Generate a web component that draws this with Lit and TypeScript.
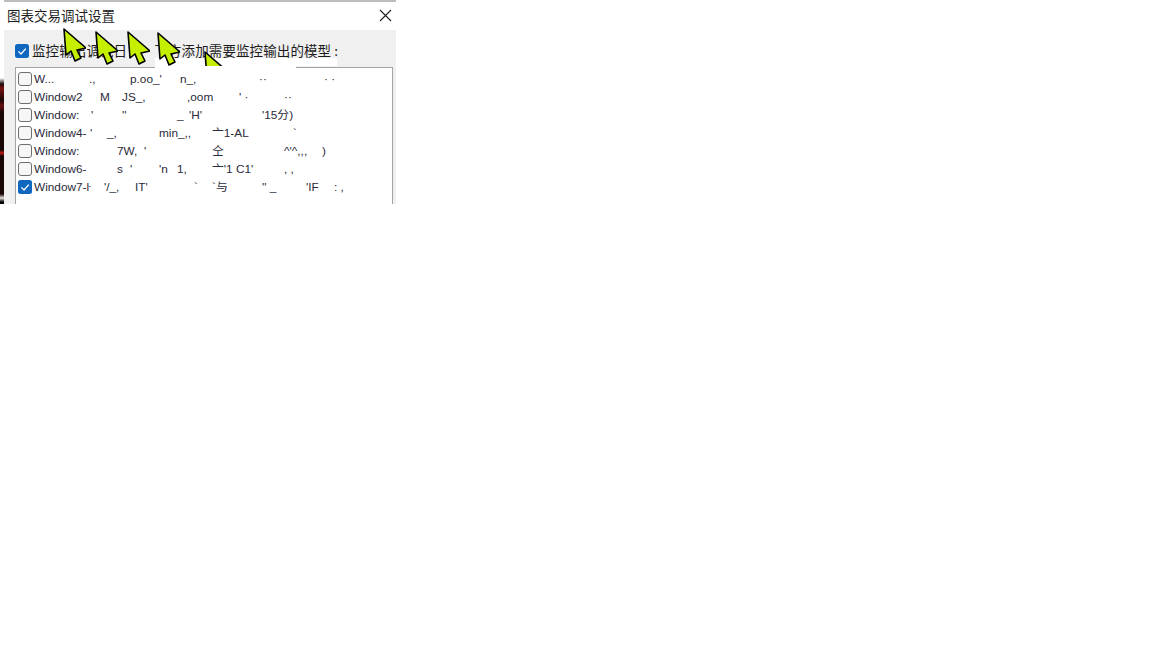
import { LitElement, html, css, svg } from "lit";
import { customElement } from "lit/decorators.js";

type Frag = [number, string];
interface Row { checked: boolean; frags: Frag[] }

const rows: Row[] = [
  { checked: false, frags: [[0, "W..."], [55, ".,"], [96, "p.oo_'"], [146, "n_,"], [225, "··"], [290, "· ·"]] },
  { checked: false, frags: [[0, "Window2"], [66, "M"], [88, "JS_,"], [153, ",oom"], [205, "' ·"], [250, "··"]] },
  { checked: false, frags: [[0, "Window:"], [57, "'"], [88, "''"], [143, "_"], [155, "'H'"], [228, "'15分)"]] },
  { checked: false, frags: [[0, "Window4-"], [56, "'"], [73, "_,"], [125, "min_,,"], [178, "亠1-AL"], [259, "`"]] },
  { checked: false, frags: [[0, "Window:"], [83, "7W,"], [110, "'"], [178, "仝"], [250, "^'^,,,"], [288, ")"]] },
  { checked: false, frags: [[0, "Window6-"], [83, "s"], [96, "'"], [125, "'n"], [143, "1,"], [178, "亠'1 C1'"], [250, ", ,"]] },
  { checked: true, frags: [[0, "Window7-ŀ"], [70, "'/_,"], [101, "IT'"], [160, "`"], [178, "`与"], [228, "'' _"], [272, "'IF"], [300, ": ,"]] },
];

const cursors: [number, number][] = [[64, 29], [96, 32], [128, 32], [158, 33], [205, 52]];

const arrowPath = "M2 2 4 28 9 24 13 34 19 31 15 23 24 21Z";
const checkMark = svg`<path d="M3.4 7.4 6 10l4.8-5.4" fill="none" stroke="#fff" stroke-width="1.3"/>`;

@customElement("app-root")
export class AppRoot extends LitElement {
  static styles = css`
    :host {
      display: block;
      width: 1152px;
      height: 648px;
      background: #fff;
      font-family: "Liberation Sans", "Noto Sans CJK SC", sans-serif;
      color: #222;
    }
    .frame {
      position: relative;
      display: flex;
      width: 396px;
      height: 204px;
      overflow: hidden;
    }
    .strip {
      width: 4px;
      flex: none;
      background: linear-gradient(
        #fff 0, #fff 78px,
        #1a0a0a 84px, #7a1010 88px, #1a0505 100px, #6a1010 106px,
        #1a0505 112px, #1a0505 150px, #c01818 153px, #1a0505 156px,
        #1a0505 194px, #e8e0e0 198px, #000 202px
      );
    }
    .dialog {
      flex: 1;
      display: flex;
      flex-direction: column;
      min-width: 0;
      border-top: 2px solid #bdbdbd;
    }
    .title {
      height: 28px;
      flex: none;
      box-sizing: border-box;
      background: #fff;
      display: flex;
      align-items: center;
      justify-content: space-between;
      padding: 0 3px 3px 3px;
      font-family: "Noto Sans CJK SC", sans-serif;
      font-size: 13.5px;
      color: #1c1c1c;
    }
    .close { width: 13px; height: 13px; margin-right: 1px; margin-top: 1px; display: block; }
    .body {
      flex: 1;
      min-height: 0;
      display: flex;
      flex-direction: column;
      background: #f0f0f0;
      padding-left: 11px;
      padding-right: 3px;
    }
    .head {
      height: 37px;
      flex: none;
      display: flex;
      align-items: center;
      gap: 3px;
      font-family: "Noto Sans CJK SC", sans-serif;
      font-size: 13.5px;
      color: #1c1c1c;
      white-space: nowrap;
      padding-top: 2px;
      box-sizing: border-box;
    }
    .head .box { margin-top: 3px; }
    .label { letter-spacing: 0.1px; }
    .box {
      width: 14px;
      height: 14px;
      flex: none;
      display: block;
    }
    .list {
      flex: 1;
      min-height: 0;
      background: #fff;
      border: 1px solid #a4a4a4;
      border-bottom: none;
      padding: 2px 0 0 2px;
      overflow: hidden;
    }
    .row {
      height: 18px;
      display: flex;
      align-items: center;
      gap: 2px;
    }
    .text {
      position: relative;
      flex: 1;
      height: 18px;
      font-size: 11.8px;
      line-height: 18px;
      color: #2a2a3a;
    }
    .frag {
      position: absolute;
      top: 0;
      white-space: nowrap;
    }
    .patch {
      position: absolute;
      background: #fff;
    }
    .p1 { left: 155px; top: 58px; width: 141px; height: 12px; }
    .p2 { left: 278px; top: 58px; width: 59px; height: 8px; }
    .p3 { left: 127px; top: 42px; width: 25px; height: 17px; background: #f0f0f0; }
    .cursor {
      position: absolute;
      width: 24px;
      height: 36px;
      display: block;
    }
    .clip {
      position: absolute;
      left: 200px;
      top: 48px;
      width: 30px;
      height: 18px;
      overflow: hidden;
    }
  `;

  private box(checked: boolean) {
    return checked
      ? html`<svg class="box" viewBox="0 0 14 14"><rect width="14" height="14" rx="2.5" fill="#0f67c0"/>${checkMark}</svg>`
      : html`<svg class="box" viewBox="0 0 14 14"><rect x=".5" y=".5" width="13" height="13" rx="2.5" fill="#f6f6f6" stroke="#6e6e6e"/></svg>`;
  }

  private arrow(x: number, y: number) {
    return html`<svg class="cursor" style="left:${x - 2}px;top:${y - 2}px" viewBox="0 0 24 36">
      <path d=${arrowPath} fill="#c4f000" stroke="#000" stroke-width="1.6" stroke-linejoin="round"/>
    </svg>`;
  }

  render() {
    const last = cursors[cursors.length - 1];
    return html`
      <div class="frame">
        <div class="strip"></div>
        <div class="dialog">
          <div class="title">
            <span>图表交易调试设置</span>
            <svg class="close" viewBox="0 0 13 13"><path d="M1 1 12 12M12 1 1 12" stroke="#222" stroke-width="1.1" fill="none"/></svg>
          </div>
          <div class="body">
            <div class="head">${this.box(true)}<span class="label">监控输出调试日志，下方添加需要监控输出的模型 :</span></div>
            <div class="list">
              ${rows.map(
                (r) => html`<div class="row">${this.box(r.checked)}
                  <div class="text">${r.frags.map(
                    ([x, t]) => html`<span class="frag" style="left:${x}px">${t}</span>`
                  )}</div>
                </div>`
              )}
            </div>
          </div>
        </div>
        <div class="patch p1"></div>
        <div class="patch p2"></div>
        <div class="patch p3"></div>
        ${cursors.slice(0, -1).map(([x, y]) => this.arrow(x, y))}
        <div class="clip"><svg class="cursor" style="left:${last[0] - 202}px;top:${last[1] - 50}px" viewBox="0 0 24 36"><path d=${arrowPath} fill="#c4f000" stroke="#000" stroke-width="1.6" stroke-linejoin="round"/></svg></div>
      </div>
    `;
  }
}
